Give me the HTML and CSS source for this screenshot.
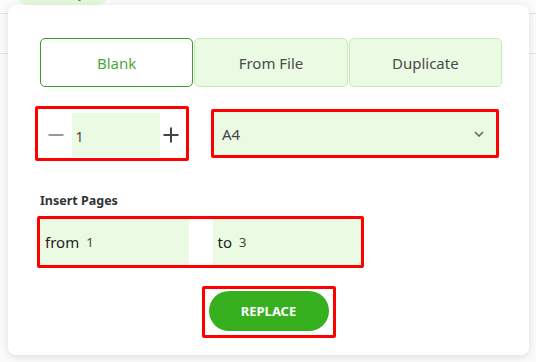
FILE: index.html
```html
<!DOCTYPE html>
<html lang="en">
<head>
    <meta charset="UTF-8">
    <meta name="viewport" content="width=device-width, initial-scale=1.0">
    <title>Insert Pages</title>
    <link rel="stylesheet" href="styles.css">
</head>
<body>

<div class="backdrop">
    <div class="tag-pill"><span class="tag-dot"></span></div>
    <div class="row-line line-top"></div>
    <div class="row-line line-second"></div>
</div>

<div class="dialog">
    <div class="tabs">
        <button class="tab active">Blank</button>
        <button class="tab">From File</button>
        <button class="tab">Duplicate</button>
    </div>

    <div class="options-row">
        <div class="counter mark">
            <button class="counter-btn minus"><span></span></button>
            <input type="text" class="counter-input" value="1">
            <button class="counter-btn plus"><span></span><span class="vert"></span></button>
        </div>
        <div class="size-select mark">
            <span class="select-value">A4</span>
            <svg class="chevron" width="10" height="6" viewBox="0 0 10 6">
                <path d="M1 1 L5 5 L9 1" fill="none" stroke="#666" stroke-width="1.6"/>
            </svg>
        </div>
    </div>

    <div class="field-label">Insert Pages</div>
    <div class="range mark">
        <div class="range-field"><span class="range-word">from</span><span class="range-num">1</span></div>
        <div class="range-field"><span class="range-word">to</span><span class="range-num">3</span></div>
    </div>

    <div class="actions">
        <div class="mark button-mark">
            <button class="replace-button">REPLACE</button>
        </div>
    </div>
</div>

</body>
</html>
```

FILE: styles.css
```css
:root {
    --green: #36b01e;
    --green-dark: #3a9a2a;
    --green-light: #ebfbe3;
    --green-border: #c6ebb8;
    --mark: #ff0000;
    --text-color: #444;
    --font-family: 'Noto Sans', 'Open Sans', sans-serif;
}

html, body {
    margin: 0;
    height: 100%;
}

body {
    font-family: var(--font-family);
    background-color: #f3f3f3;
    color: var(--text-color);
    position: relative;
    overflow: hidden;
}

.backdrop {
    height: 100%;
    background-color: #fbfbfb;
}

.tag-pill {
    position: absolute;
    left: 15px;
    top: -20px;
    width: 95px;
    height: 25px;
    border-radius: 0 0 14px 14px;
    background-color: #e6f8dc;
}

.tag-dot {
    position: absolute;
    left: 63px;
    bottom: 4px;
    width: 3px;
    height: 3px;
    border-radius: 50%;
    background-color: #3a8a2a;
}

.row-line {
    position: absolute;
    left: 0;
    right: 0;
    height: 1px;
    background-color: #e2e2e2;
}

.line-top {
    top: 13px;
}

.line-second {
    top: 53px;
}

.dialog {
    position: absolute;
    left: 8px;
    top: 5px;
    width: 521px;
    height: 350px;
    box-sizing: border-box;
    background-color: white;
    border-radius: 8px;
    box-shadow: 0 2px 8px rgba(0, 0, 0, 0.12);
    padding: 33px 27px 0 27px;
}

.tabs {
    display: flex;
    gap: 1px;
    margin-left: 5px;
    width: 462px;
}

.tab {
    flex: 1;
    height: 49px;
    font-family: var(--font-family);
    font-size: 15px;
    color: #4a4a4a;
    background-color: var(--green-light);
    border: 1px solid var(--green-border);
    border-radius: 5px;
    cursor: pointer;
}

.tab.active {
    background-color: white;
    color: #4aa83a;
    border-color: var(--green-dark);
}

.mark {
    border: 3px solid var(--mark);
    border-radius: 2px;
    box-sizing: border-box;
}

.options-row {
    display: flex;
    align-items: center;
    gap: 22px;
    margin-top: 19px;
}

.counter {
    display: flex;
    align-items: center;
    width: 154px;
    height: 55px;
    padding: 4px 3px 1px 3px;
}

.counter-btn {
    position: relative;
    height: 44px;
    background: none;
    border: none;
    padding: 0;
    cursor: pointer;
}

.counter-btn span {
    position: absolute;
    left: 50%;
    top: 50%;
    width: 15px;
    height: 2px;
    transform: translate(-50%, -50%);
}

.counter-btn span.vert {
    width: 2px;
    height: 15px;
}

.minus {
    width: 34px;
}

.minus span {
    background-color: #999;
}

.plus {
    width: 26px;
}

.plus span {
    background-color: #444;
}

.counter-input {
    width: 88px;
    height: 44px;
    box-sizing: border-box;
    border: none;
    outline: none;
    background-color: var(--green-light);
    font-family: var(--font-family);
    font-size: 14px;
    color: var(--text-color);
    padding: 2px 0 0 4px;
}

.size-select {
    display: flex;
    align-items: center;
    justify-content: space-between;
    width: 288px;
    height: 49px;
    background-color: var(--green-light);
    padding: 0 12px 0 8px;
}

.select-value {
    font-size: 15px;
    color: var(--text-color);
}

.field-label {
    margin: 31px 0 0 5px;
    font-size: 12.5px;
    font-weight: 700;
    color: #333;
}

.range {
    display: flex;
    gap: 24px;
    width: 327px;
    height: 52px;
    margin: 7px 0 0 2px;
}

.range-field {
    flex: 1;
    display: flex;
    align-items: center;
    gap: 7px;
    background-color: var(--green-light);
    padding-left: 5px;
}

.range-word {
    font-size: 15px;
    color: #222;
}

.range-num {
    font-size: 13px;
    color: var(--text-color);
}

.actions {
    display: flex;
    justify-content: center;
    margin-top: 18px;
}

.button-mark {
    padding: 2px 4px 4px 4px;
}

.replace-button {
    width: 120px;
    height: 40px;
    border: none;
    border-radius: 20px;
    background-color: var(--green);
    color: white;
    font-family: var(--font-family);
    font-size: 13px;
    font-weight: 700;
    cursor: pointer;
}
```
